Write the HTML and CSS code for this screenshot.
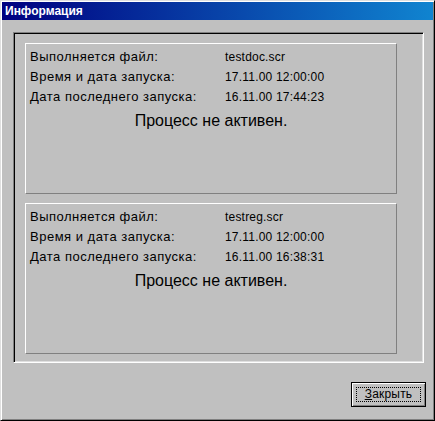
FILE: index.html
```html
<!DOCTYPE html>
<html lang="ru">
<head>
<meta charset="utf-8">
<title>Информация</title>
<link rel="stylesheet" href="styles.css">
</head>
<body>
<div class="window">
  <div class="titlebar"><span class="title">Информация</span></div>
  <div class="client">
    <div class="frame">
      <div class="panel">
        <div class="row"><span class="label">Выполняется файл:</span><span class="value">testdoc.scr</span></div>
        <div class="row"><span class="label">Время и дата запуска:</span><span class="value">17.11.00 12:00:00</span></div>
        <div class="row"><span class="label">Дата последнего запуска:</span><span class="value">16.11.00 17:44:23</span></div>
        <div class="status">Процесс не активен.</div>
      </div>
      <div class="panel">
        <div class="row"><span class="label">Выполняется файл:</span><span class="value">testreg.scr</span></div>
        <div class="row"><span class="label">Время и дата запуска:</span><span class="value">17.11.00 12:00:00</span></div>
        <div class="row"><span class="label">Дата последнего запуска:</span><span class="value">16.11.00 16:38:31</span></div>
        <div class="status">Процесс не активен.</div>
      </div>
    </div>
    <div class="actions">
      <button class="btn" type="button"><span class="focus"><u>З</u>акрыть</span></button>
    </div>
  </div>
</div>
</body>
</html>
```
FILE: styles.css
```css
html, body {
  margin: 0;
  padding: 0;
  background: #c0c0c0;
}

.window {
  width: 435px;
  height: 421px;
  box-sizing: border-box;
  border-style: solid;
  border-width: 1px;
  border-color: #dfdfdf #000 #000 #dfdfdf;
  box-shadow: inset 1px 1px #fff, inset -1px -1px #808080;
  padding: 1px;
  background: #c0c0c0;
  display: flex;
  flex-direction: column;
  font-family: "Liberation Sans", Arial, sans-serif;
  color: #000;
}

.titlebar {
  height: 18px;
  flex: none;
  background: linear-gradient(to right, #000080, #1084d0);
  display: flex;
  align-items: center;
  padding-left: 3px;
}

.title {
  color: #fff;
  font-weight: bold;
  font-size: 12px;
  line-height: 14px;
}

.client {
  padding: 12px 0 0 11px;
  display: flex;
  flex-direction: column;
}

.frame {
  width: 411px;
  height: 331px;
  box-sizing: border-box;
  border-style: solid;
  border-width: 1px;
  border-color: #808080 #fff #fff #808080;
  box-shadow: inset 1px 1px #000, inset -1px -1px #dfdfdf;
  padding: 10px 0 0 11px;
  display: flex;
  flex-direction: column;
  gap: 9px;
}

.panel {
  width: 372px;
  height: 151px;
  box-sizing: border-box;
  border-style: solid;
  border-width: 1px;
  border-color: #fff #808080 #808080 #fff;
  padding: 3px 0 0 4px;
}

.row {
  display: flex;
  align-items: baseline;
  line-height: 20px;
  white-space: nowrap;
}

.label {
  width: 195px;
  flex: none;
  font-size: 13px;
  letter-spacing: 0.5px;
}

.value {
  font-size: 12px;
  letter-spacing: 0.2px;
}

.status {
  text-align: center;
  font-size: 16px;
  line-height: 20px;
  margin-top: 4px;
  padding-right: 4px;
}

.actions {
  display: flex;
  justify-content: flex-end;
  padding: 19px 7px 0 0;
}

.btn {
  width: 75px;
  height: 25px;
  box-sizing: border-box;
  border: 1px solid #000;
  background: #c0c0c0;
  box-shadow: inset 1px 1px #fff, inset -1px -1px #808080;
  padding: 0;
  margin: 0;
  display: flex;
  align-items: center;
  justify-content: center;
  font-family: "Liberation Sans", Arial, sans-serif;
  font-size: 12px;
  letter-spacing: 0.2px;
  color: #000;
}

.focus {
  width: 65px;
  height: 15px;
  box-sizing: border-box;
  border: 1px dotted #000;
  display: flex;
  align-items: center;
  justify-content: center;
  line-height: 13px;
}

.focus u {
  text-decoration: underline;
  text-underline-offset: 1px;
}
```
